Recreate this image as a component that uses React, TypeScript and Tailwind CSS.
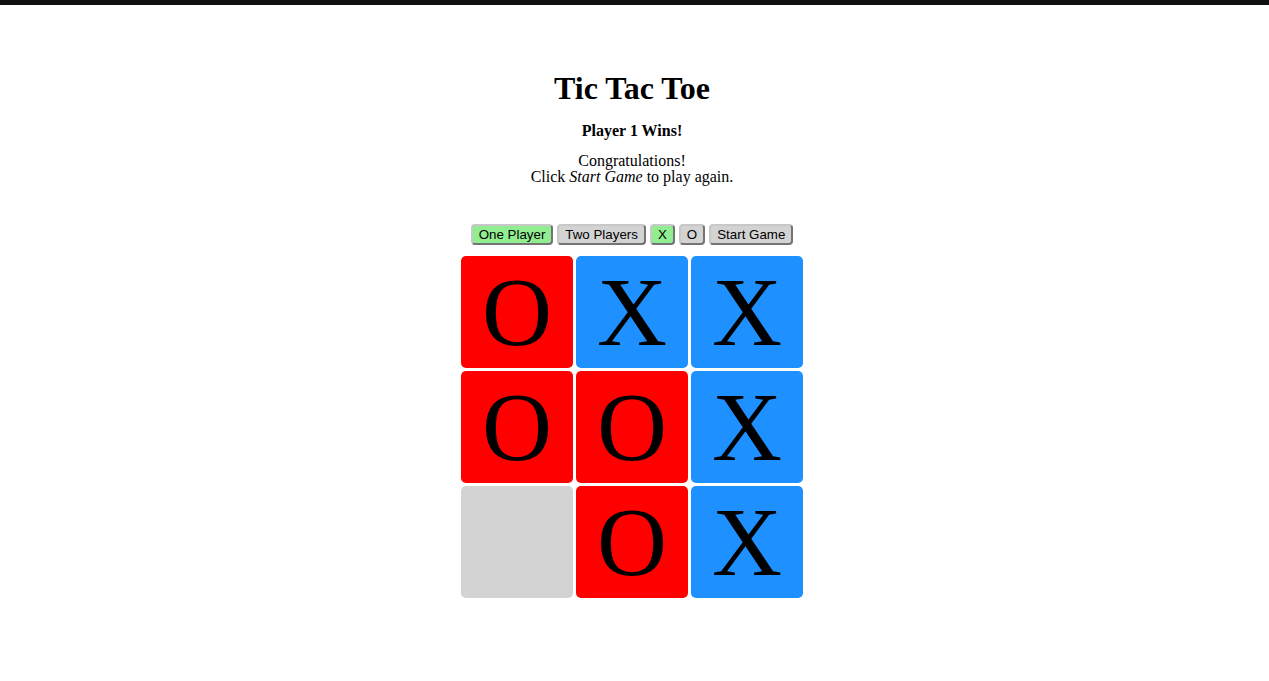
const board: (string | null)[] = ['O', 'X', 'X', 'O', 'O', 'X', null, 'O', 'X'];

function Cell({ value }: { value: string | null }) {
  const bg = value === 'O' ? 'bg-[#ff0000]' : value === 'X' ? 'bg-[#1e90ff]' : 'bg-[#d3d3d3]';
  return (
    <div
      className={`w-[112px] h-[112px] rounded-[5px] ${bg} flex items-center justify-center text-[97px] leading-none text-black`}
      style={{ fontFamily: '"Liberation Serif", serif' }}
    >
      {value}
    </div>
  );
}

function Btn({ label, active }: { label: string; active?: boolean }) {
  return (
    <button
      className={`h-[21px] px-[6px] text-[13.333px] leading-none rounded-[4px] border-2 [border-style:outset] border-[#c8c8c8] text-black ${
        active ? 'bg-[#90ee90]' : 'bg-[#d3d3d3]'
      }`}
      style={{ fontFamily: '"Liberation Sans", Arial, sans-serif' }}
    >
      {label}
    </button>
  );
}

export default function App() {
  return (
    <div className="min-h-[681px] bg-white text-black" style={{ fontFamily: '"Liberation Serif", serif' }}>
      <div className="h-[5px] bg-[#111111]" />
      <div className="flex flex-col items-center pr-[5px]">
        <h1 className="mt-[65px] text-[32px] font-bold leading-[36px]">Tic Tac Toe</h1>
        <div className="mt-[16px] text-[16px] font-bold leading-[18px]">Player 1 Wins!</div>
        <div className="mt-[13px] text-[16px] leading-[16px] text-center">
          Congratulations!
          <br />
          Click <i>Start Game</i> to play again.
        </div>
        <div className="mt-[39px] flex gap-[4px]">
          <Btn label="One Player" active />
          <Btn label="Two Players" />
          <Btn label="X" active />
          <Btn label="O" />
          <Btn label="Start Game" />
        </div>
        <div className="mt-[11px] grid grid-cols-[112px_112px_112px] gap-[3px]">
          {board.map((v, i) => (
            <Cell key={i} value={v} />
          ))}
        </div>
      </div>
    </div>
  );
}
